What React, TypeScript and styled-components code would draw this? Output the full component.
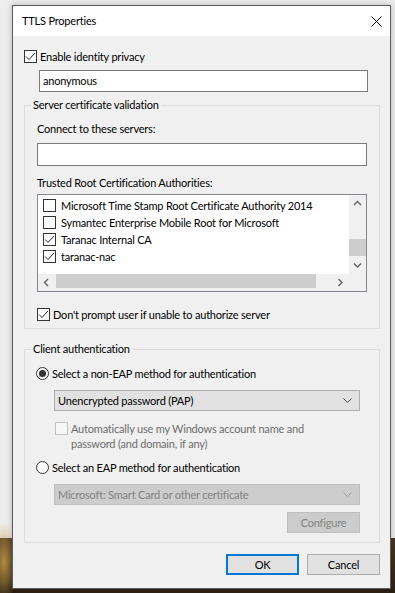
import React from "react";
import styled, { createGlobalStyle } from "styled-components";

const GlobalStyle = createGlobalStyle`
  html, body { margin: 0; padding: 0; }
  body {
    font-family: Lato, "Liberation Sans", Arial, sans-serif;
    font-size: 11px;
    letter-spacing: -0.2px;
    color: #000;
  }
  * { box-sizing: border-box; }
`;

const Desktop = styled.div`
  width: 395px;
  height: 593px;
  overflow: hidden;
  padding: 5px 0 0 12px;
  background:
    radial-gradient(ellipse 14px 40px at 4px 562px, rgba(190, 150, 70, 0.9), rgba(190, 150, 70, 0) 100%),
    linear-gradient(
      to bottom,
      #ededed 0,
      #ededed 538px,
      #4a3620 538px,
      #2d2014 100%
    );
`;

const Window = styled.div`
  width: 379px;
  height: 584px;
  border: 1px solid #5c5c5c;
  background: #f0f0f0;
  display: flex;
  flex-direction: column;
  box-shadow: 0 0 6px rgba(0, 0, 0, 0.25);
`;

const TitleBar = styled.div`
  height: 30px;
  flex: none;
  background: #fff;
  display: flex;
  align-items: center;
  justify-content: space-between;
  padding-left: 9px;
`;

const Title = styled.span`
  line-height: 16px;
`;

const CloseButton = styled.div`
  width: 28px;
  height: 30px;
  display: flex;
  align-items: center;
  justify-content: center;
`;

const Body = styled.div`
  flex: 1;
  display: flex;
  flex-direction: column;
  padding: 0 10px 0 11px;
`;

const CheckRow = styled.label<{ $mt?: number; $ml?: number; $disabled?: boolean }>`
  display: flex;
  align-items: ${(p) => (p.$disabled ? "flex-start" : "center")};
  gap: 3px;
  min-height: 15px;
  line-height: 15px;
  margin-top: ${(p) => p.$mt ?? 0}px;
  margin-left: ${(p) => p.$ml ?? 0}px;
  color: ${(p) => (p.$disabled ? "#6d6d6d" : "#000")};
`;

const Box = styled.span<{ $disabled?: boolean }>`
  flex: none;
  width: 13px;
  height: 13px;
  border: 1px solid ${(p) => (p.$disabled ? "#c2c2c2" : "#333")};
  background: ${(p) => (p.$disabled ? "#f7f7f7" : "#fff")};
  display: flex;
  align-items: center;
  justify-content: center;
  margin-top: ${(p) => (p.$disabled ? 1 : 0)}px;
`;

const Radio = styled.span<{ $on?: boolean }>`
  flex: none;
  width: 13px;
  height: 13px;
  border-radius: 50%;
  border: 1px solid #333;
  background: #fff;
  display: flex;
  align-items: center;
  justify-content: center;
  &::after {
    content: "";
    display: ${(p) => (p.$on ? "block" : "none")};
    width: 7px;
    height: 7px;
    border-radius: 50%;
    background: #333;
  }
`;

const TextInput = styled.div<{ $mt: number; $ml: number; $w: number; $h: number }>`
  margin-top: ${(p) => p.$mt}px;
  margin-left: ${(p) => p.$ml}px;
  width: ${(p) => p.$w}px;
  height: ${(p) => p.$h}px;
  border: 1px solid #7a7a7a;
  background: #fff;
  padding-left: 3px;
  line-height: ${(p) => p.$h - 2}px;
`;

const Group = styled.fieldset<{ $mt: number }>`
  margin: ${(p) => p.$mt}px 0 0 0;
  padding: 0;
  border: 1px solid #dcdcdc;
  min-width: 0;
`;

const Legend = styled.legend`
  margin-left: 6px;
  padding: 0 2px;
  line-height: 16px;
`;

const GroupInner = styled.div<{ $pl: number; $pb: number }>`
  display: flex;
  flex-direction: column;
  padding: 0 0 ${(p) => p.$pb}px ${(p) => p.$pl}px;
`;

const Label = styled.div<{ $mt: number }>`
  margin-top: ${(p) => p.$mt}px;
  line-height: 16px;
`;

const ListBox = styled.div`
  margin-top: 3px;
  width: 330px;
  height: 98px;
  border: 1px solid #828790;
  background: #fff;
  display: grid;
  grid-template-columns: 1fr 17px;
  grid-template-rows: 1fr 17px;
`;

const ListItems = styled.div`
  padding: 2px 0 0 5px;
  overflow: hidden;
`;

const ListItem = styled.div`
  height: 17px;
  display: flex;
  align-items: center;
  gap: 5px;
  white-space: nowrap;
`;

const VScroll = styled.div`
  background: #f0f0f0;
  display: flex;
  flex-direction: column;
`;

const HScroll = styled.div`
  background: #f0f0f0;
  display: flex;
  align-items: stretch;
`;

const ArrowBtn = styled.div`
  flex: none;
  width: 17px;
  height: 17px;
  display: flex;
  align-items: center;
  justify-content: center;
`;

const VTrack = styled.div`
  flex: 1;
  padding-top: 27px;
`;

const VThumb = styled.div`
  height: 17px;
  background: #cdcdcd;
`;

const HTrack = styled.div`
  flex: 1;
  padding: 0 0 3px 1px;
`;

const HThumb = styled.div`
  width: 260px;
  height: 100%;
  background: #cdcdcd;
`;

const Corner = styled.div`
  background: #f0f0f0;
`;

const Select = styled.div<{ $mt: number; $disabled?: boolean }>`
  margin: ${(p) => p.$mt}px 0 0 18px;
  width: 306px;
  height: 21px;
  border: 1px solid ${(p) => (p.$disabled ? "#bfbfbf" : "#adadad")};
  background: ${(p) => (p.$disabled ? "#cccccc" : "#e1e1e1")};
  color: ${(p) => (p.$disabled ? "#838383" : "#000")};
  display: flex;
  align-items: center;
  justify-content: space-between;
  padding: 0 7px 0 3px;
`;

const WrapText = styled.span`
  width: 245px;
`;

const ButtonRow = styled.div<{ $mt: number }>`
  margin-top: ${(p) => p.$mt}px;
  display: flex;
  justify-content: flex-end;
  gap: 8px;
`;

const Button = styled.div<{ $variant?: "default" | "disabled" | "normal" }>`
  width: 73px;
  height: 21px;
  display: flex;
  align-items: center;
  justify-content: center;
  background: ${(p) => (p.$variant === "disabled" ? "#cccccc" : "#e1e1e1")};
  border: 1px solid
    ${(p) =>
      p.$variant === "default" ? "#0078d7" : p.$variant === "disabled" ? "#bfbfbf" : "#adadad"};
  box-shadow: ${(p) => (p.$variant === "default" ? "inset 0 0 0 1px #0078d7" : "none")};
  color: ${(p) => (p.$variant === "disabled" ? "#838383" : "#000")};
`;

const ConfigureRow = styled.div`
  margin-top: 7px;
  width: 324px;
  display: flex;
  justify-content: flex-end;
`;

const Check = () => (
  <svg width="11" height="11" viewBox="0 0 11 11">
    <path d="M1 5.5 L4 8.5 L10 2" fill="none" stroke="#222" strokeWidth="1" />
  </svg>
);

const Chevron = ({ dir, color = "#606060" }: { dir: "up" | "down" | "left" | "right"; color?: string }) => {
  const d =
    dir === "up"
      ? "M1 5 L4.5 1.5 L8 5"
      : dir === "down"
      ? "M1 1.5 L4.5 5 L8 1.5"
      : dir === "left"
      ? "M5 1 L1.5 4.5 L5 8"
      : "M1.5 1 L5 4.5 L1.5 8";
  const w = dir === "up" || dir === "down" ? 9 : 7;
  const h = dir === "up" || dir === "down" ? 7 : 9;
  return (
    <svg width={w} height={h} viewBox={`0 0 ${w} ${h}`}>
      <path d={d} fill="none" stroke={color} strokeWidth="1.4" />
    </svg>
  );
};

const ComboArrow = ({ color }: { color: string }) => (
  <svg width="9" height="5" viewBox="0 0 9 5">
    <path d="M0.5 0.5 L4.5 4.5 L8.5 0.5" fill="none" stroke={color} strokeWidth="1" />
  </svg>
);

const certs = [
  { name: "Microsoft Time Stamp Root Certificate Authority 2014", on: false },
  { name: "Symantec Enterprise Mobile Root for Microsoft", on: false },
  { name: "Taranac Internal CA", on: true },
  { name: "taranac-nac", on: true },
];

export default function App() {
  return (
    <>
      <GlobalStyle />
      <Desktop>
        <Window>
          <TitleBar>
            <Title>TTLS Properties</Title>
            <CloseButton>
              <svg width="11" height="11" viewBox="0 0 11 11">
                <path d="M0.5 0.5 L10.5 10.5 M10.5 0.5 L0.5 10.5" stroke="#000" strokeWidth="1" />
              </svg>
            </CloseButton>
          </TitleBar>
          <Body>
            <CheckRow $mt={13}>
              <Box>
                <Check />
              </Box>
              <span>Enable identity privacy</span>
            </CheckRow>
            <TextInput $mt={6} $ml={15} $w={329} $h={22}>
              anonymous
            </TextInput>

            <Group $mt={5}>
              <Legend>Server certificate validation</Legend>
              <GroupInner $pl={12} $pb={6}>
                <Label $mt={8}>Connect to these servers:</Label>
                <TextInput $mt={6} $ml={0} $w={330} $h={23} />
                <Label $mt={9}>Trusted Root Certification Authorities:</Label>
                <ListBox>
                  <ListItems>
                    {certs.map((c) => (
                      <ListItem key={c.name}>
                        <Box>{c.on && <Check />}</Box>
                        <span>{c.name}</span>
                      </ListItem>
                    ))}
                  </ListItems>
                  <VScroll>
                    <ArrowBtn>
                      <Chevron dir="up" />
                    </ArrowBtn>
                    <VTrack>
                      <VThumb />
                    </VTrack>
                    <ArrowBtn>
                      <Chevron dir="down" />
                    </ArrowBtn>
                  </VScroll>
                  <HScroll>
                    <ArrowBtn>
                      <Chevron dir="left" />
                    </ArrowBtn>
                    <HTrack>
                      <HThumb />
                    </HTrack>
                    <ArrowBtn>
                      <Chevron dir="right" />
                    </ArrowBtn>
                  </HScroll>
                  <Corner />
                </ListBox>
                <CheckRow $mt={15}>
                  <Box>
                    <Check />
                  </Box>
                  <span>Don't prompt user if unable to authorize server</span>
                </CheckRow>
              </GroupInner>
            </Group>

            <Group $mt={12}>
              <Legend>Client authentication</Legend>
              <GroupInner $pl={11} $pb={9}>
                <CheckRow $mt={9}>
                  <Radio $on />
                  <span>Select a non-EAP method for authentication</span>
                </CheckRow>
                <Select $mt={9}>
                  <span>Unencrypted password (PAP)</span>
                  <ComboArrow color="#444" />
                </Select>
                <CheckRow $mt={10} $ml={19} $disabled>
                  <Box $disabled />
                  <WrapText>
                    Automatically use my Windows account name and password (and domain, if any)
                  </WrapText>
                </CheckRow>
                <CheckRow $mt={9}>
                  <Radio />
                  <span>Select an EAP method for authentication</span>
                </CheckRow>
                <Select $mt={9} $disabled>
                  <span>Microsoft: Smart Card or other certificate</span>
                  <ComboArrow color="#a0a0a0" />
                </Select>
                <ConfigureRow>
                  <Button $variant="disabled">Configure</Button>
                </ConfigureRow>
              </GroupInner>
            </Group>

            <ButtonRow $mt={11}>
              <Button $variant="default">OK</Button>
              <Button $variant="normal">Cancel</Button>
            </ButtonRow>
          </Body>
        </Window>
      </Desktop>
    </>
  );
}
